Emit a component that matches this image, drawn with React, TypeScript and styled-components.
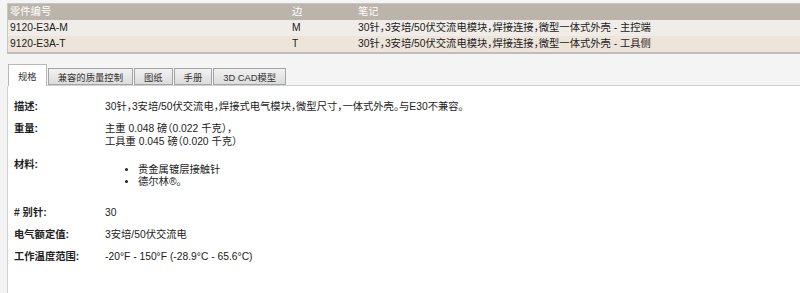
import React from "react";
import styled, { createGlobalStyle } from "styled-components";

const Global = createGlobalStyle`
  html, body { margin: 0; padding: 0; background: #f4f4f4; }
  body {
    font-family: "Liberation Sans", "Noto Sans CJK SC", sans-serif;
    font-size: 10.5px;
    font-size-adjust: 0.519;
    font-feature-settings: "halt";
    color: #222;
  }
`;

const Page = styled.div`
  width: 800px;
  height: 293px;
  overflow: hidden;
  padding-top: 3px;
  box-sizing: border-box;
`;

const Table = styled.div`
  margin-left: 7px;
  border-top: 1px solid #c9c5c0;
  border-left: 1px solid #c9c5c0;
  border-bottom: 2px solid #bdbdbd;
`;

const Row = styled.div<{ $bg: string; $head?: boolean }>`
  display: grid;
  grid-template-columns: 282px 66px 1fr;
  height: 16px;
  line-height: 16px;
  align-items: center;
  background: ${(p) => p.$bg};
  color: ${(p) => (p.$head ? "#fff" : "#222")};
  padding-left: 2px;
`;

const Cell = styled.div`
  white-space: nowrap;
`;

const TabStrip = styled.div`
  margin-top: 10px;
  margin-left: 8px;
  display: flex;
  align-items: flex-end;
  height: 21px;
  border-bottom: 1px solid #cdd3d0;
`;

const Tab = styled.div<{ $active?: boolean }>`
  box-sizing: border-box;
  height: ${(p) => (p.$active ? "22px" : "17px")};
  padding: 0 9px;
  margin-right: 1px;
  margin-bottom: ${(p) => (p.$active ? "-1px" : "0")};
  display: flex;
  align-items: center;
  font-size: 9.5px;
  border: 1px solid ${(p) => (p.$active ? "#b8b8b8" : "#a4a4a4")};
  border-bottom: ${(p) => (p.$active ? "none" : "1px solid #a4a4a4")};
  background: ${(p) =>
    p.$active ? "#ffffff" : "linear-gradient(#f2f2f2, #dcdcdc)"};
  color: #333;
  white-space: nowrap;
`;

const Content = styled.div`
  margin-left: 7px;
  border-left: 1px solid #d0d0d0;
  background: #fff;
  height: 220px;
  padding: 14px 0 0 6px;
  box-sizing: border-box;
`;

const Spec = styled.div<{ $gap: number }>`
  display: grid;
  grid-template-columns: 91px 1fr;
  margin-bottom: ${(p) => p.$gap}px;
  line-height: 13px;
`;

const Label = styled.div`
  font-weight: bold;
  color: #222;
`;

const Value = styled.div`
  color: #222;
`;

const Bullets = styled.ul`
  margin: 6px 0 0 0;
  padding-left: 33px;
  line-height: 12px;
  list-style: disc;
`;

const Bullet = styled.li`
  height: 12px;
  line-height: 12px;
`;

export default function App() {
  return (
    <>
      <Global />
      <Page>
        <Table>
          <Row $bg="#bbb4aa" $head>
            <Cell>零件编号</Cell>
            <Cell>边</Cell>
            <Cell>笔记</Cell>
          </Row>
          <Row $bg="#f0ece7">
            <Cell>9120-E3A-M</Cell>
            <Cell>M</Cell>
            <Cell>30针，3安培/50伏交流电模块，焊接连接，微型一体式外壳 - 主控端</Cell>
          </Row>
          <Row $bg="#ede4da">
            <Cell>9120-E3A-T</Cell>
            <Cell>T</Cell>
            <Cell>30针，3安培/50伏交流电模块，焊接连接，微型一体式外壳 - 工具侧</Cell>
          </Row>
        </Table>
        <TabStrip>
          <Tab $active>规格</Tab>
          <Tab>兼容的质量控制</Tab>
          <Tab>图纸</Tab>
          <Tab>手册</Tab>
          <Tab>3D CAD模型</Tab>
        </TabStrip>
        <Content>
          <Spec $gap={9}>
            <Label>描述:</Label>
            <Value>30针，3安培/50伏交流电，焊接式电气模块，微型尺寸，一体式外壳。与E30不兼容。</Value>
          </Spec>
          <Spec $gap={10}>
            <Label>重量:</Label>
            <Value>
              主重 0.048 磅（0.022 千克），
              <br />
              工具重 0.045 磅（0.020 千克）
            </Value>
          </Spec>
          <Spec $gap={18}>
            <Label>材料:</Label>
            <Value>
              <Bullets>
                <Bullet>贵金属镀层接触针</Bullet>
                <Bullet>德尔林®。</Bullet>
              </Bullets>
            </Value>
          </Spec>
          <Spec $gap={9}>
            <Label># 别针:</Label>
            <Value>30</Value>
          </Spec>
          <Spec $gap={9}>
            <Label>电气额定值:</Label>
            <Value>3安培/50伏交流电</Value>
          </Spec>
          <Spec $gap={9}>
            <Label>工作温度范围:</Label>
            <Value>-20°F - 150°F (-28.9°C - 65.6°C)</Value>
          </Spec>
        </Content>
      </Page>
    </>
  );
}
